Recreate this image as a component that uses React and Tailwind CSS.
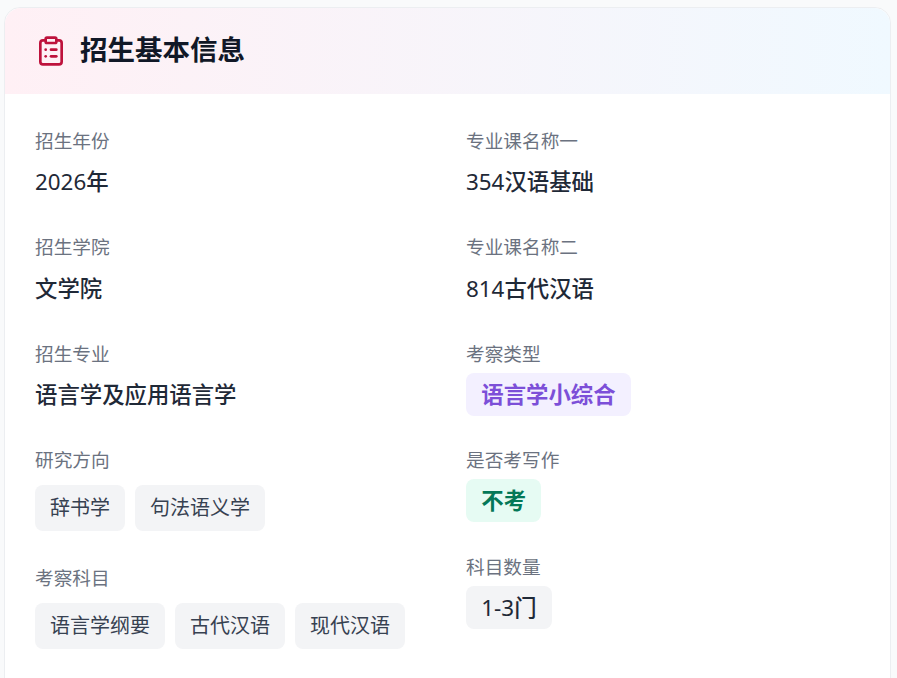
function Label({ children }) {
  return <div className="text-[18.67px] leading-[28px] text-[#6b7280]">{children}</div>;
}

function Value({ children }) {
  return <div className="mt-[11.3px] text-[22.4px] leading-[32px] font-medium text-[#1f2937]">{children}</div>;
}

function Num({ children }) {
  return <span className="font-normal">{children}</span>;
}

function Tag({ children }) {
  return <span className="rounded-lg bg-[#f3f4f6] px-[15px] py-[8px] text-[20px] leading-[30px] text-[#374151]">{children}</span>;
}

function Pill({ className, children }) {
  return <span className={"inline-block rounded-lg px-[15.3px] py-[6px] text-[22.4px] leading-[31px] " + className}>{children}</span>;
}

export default function App() {
  return (
    <div className="h-[678px] overflow-hidden bg-[#f9fafb] pl-1 pr-[6px] pt-[7px] font-['Noto_Sans','Noto_Sans_CJK_SC',sans-serif]">
      <div className="h-[720px] rounded-2xl border border-[#eceef1] bg-white">
        <div className="flex h-[86px] items-center gap-[13px] rounded-t-2xl bg-gradient-to-r from-[#fff0f5] to-[#f0f9ff] px-[30px] pb-[2px]">
          <svg className="mt-[2px]" width="32" height="32" viewBox="0 0 24 24" fill="none" stroke="#be123c" strokeWidth="2" strokeLinecap="round" strokeLinejoin="round">
            <rect x="8" y="2" width="8" height="4" rx="1" />
            <path d="M16 4h2a2 2 0 0 1 2 2v14a2 2 0 0 1-2 2H6a2 2 0 0 1-2-2V6a2 2 0 0 1 2-2h2" />
            <path d="M12 11h4" />
            <path d="M12 16h4" />
            <path d="M8 11h.01" />
            <path d="M8 16h.01" />
          </svg>
          <h1 className="text-[27.5px] leading-[38px] font-bold text-[#111827]">招生基本信息</h1>
        </div>
        <div className="grid grid-cols-[431px_1fr] px-[30px] pt-[33px]">
          <div className="flex flex-col">
            <div className="mb-[35.1px]"><Label>招生年份</Label><Value><Num>2026</Num>年</Value></div>
            <div className="mb-[35.1px]"><Label>招生学院</Label><Value>文学院</Value></div>
            <div className="mb-[35.1px]"><Label>招生专业</Label><Value>语言学及应用语言学</Value></div>
            <div className="mb-[33px]">
              <Label>研究方向</Label>
              <div className="mt-[11px] flex gap-[10px]">
                <Tag>辞书学</Tag>
                <Tag>句法语义学</Tag>
              </div>
            </div>
            <div>
              <Label>考察科目</Label>
              <div className="mt-[11px] flex gap-[10px]">
                <Tag>语言学纲要</Tag>
                <Tag>古代汉语</Tag>
                <Tag>现代汉语</Tag>
              </div>
            </div>
          </div>
          <div className="flex flex-col">
            <div className="mb-[35.1px]"><Label>专业课名称一</Label><Value><Num>354</Num>汉语基础</Value></div>
            <div className="mb-[35.1px]"><Label>专业课名称二</Label><Value><Num>814</Num>古代汉语</Value></div>
            <div className="mb-[30.4px]">
              <Label>考察类型</Label>
              <div className="mt-[5px] h-[43px]"><Pill className="bg-[#f3f0ff] font-semibold text-[#7c4fd8]">语言学小综合</Pill></div>
            </div>
            <div className="mb-[30.4px]">
              <Label>是否考写作</Label>
              <div className="mt-[5px] h-[43px]"><Pill className="bg-[#e6fbf3] font-semibold text-[#047857]">不考</Pill></div>
            </div>
            <div>
              <Label>科目数量</Label>
              <div className="mt-[5px] h-[43px]"><Pill className="bg-[#f3f4f6] font-medium text-[#1f2937]"><Num>1-3</Num>门</Pill></div>
            </div>
          </div>
        </div>
      </div>
    </div>
  );
}
